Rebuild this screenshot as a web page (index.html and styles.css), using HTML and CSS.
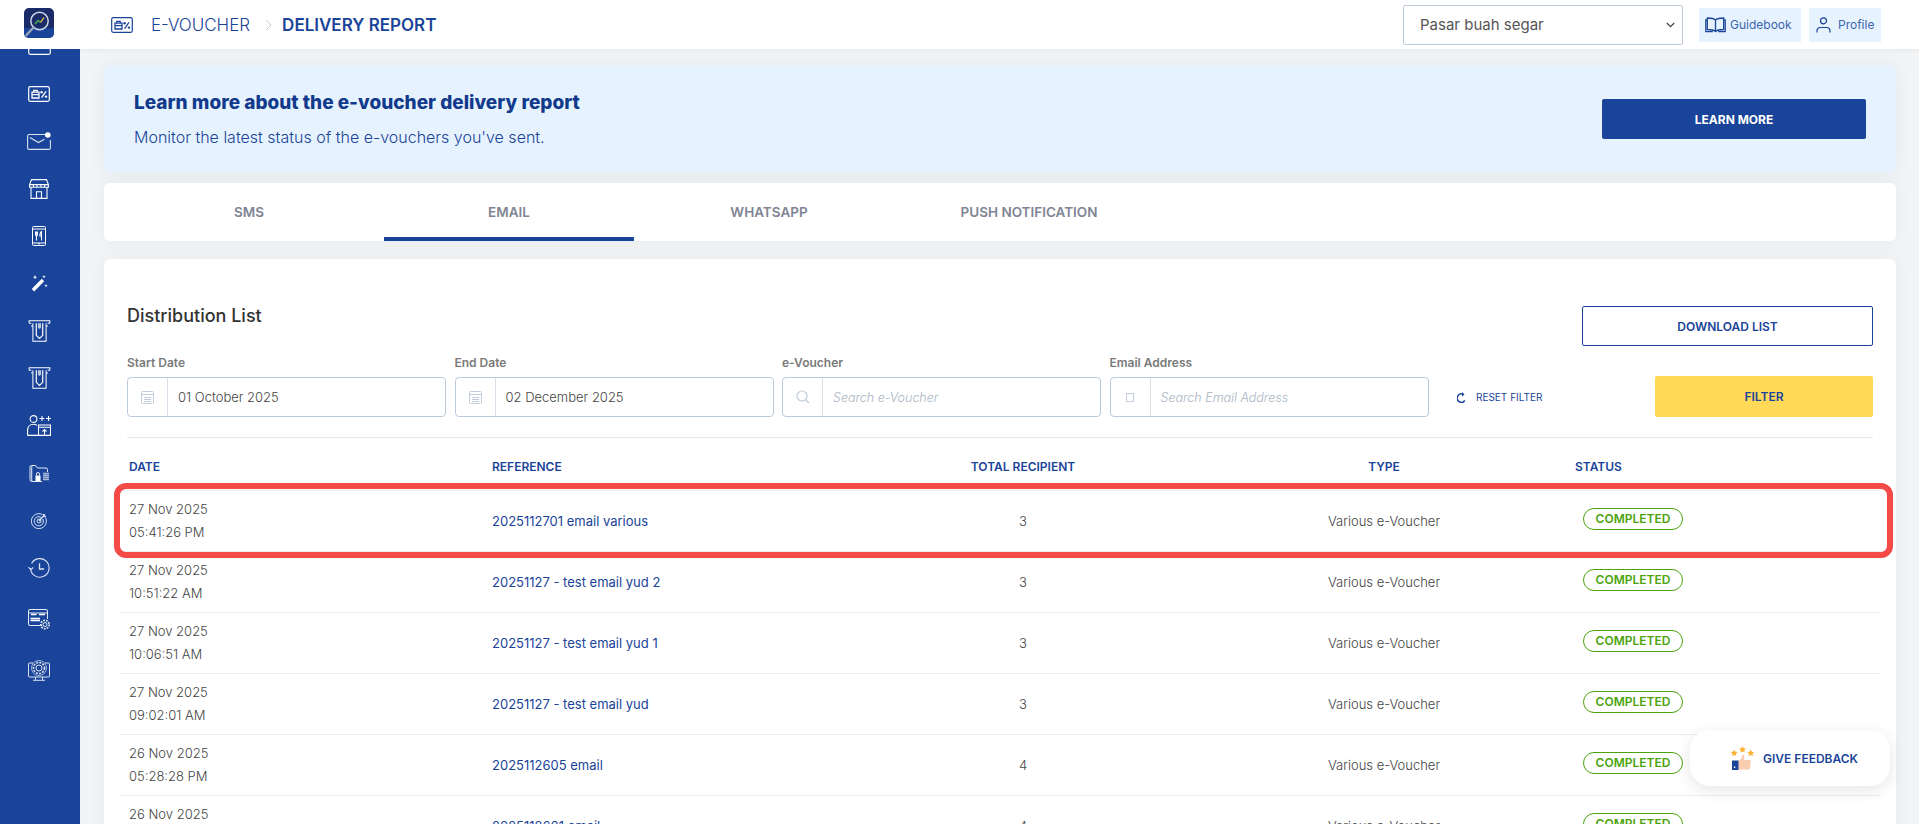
FILE: index.html
```html
<!DOCTYPE html>
<html lang="en">
<head>
    <meta charset="UTF-8">
    <title>E-Voucher Delivery Report</title>
    <link rel="stylesheet" href="styles.css">
</head>
<body>
    <!-- Shared icons -->
    <svg class="icon-defs" width="0" height="0">
        <symbol id="i-voucher" viewBox="0 0 22 16">
            <rect x="0.7" y="0.7" width="20.6" height="14.6" rx="1.5" fill="none" stroke="currentColor" stroke-width="1.2"/>
            <path d="M4 6.2h7v5.8H4zM5.8 6V4.4h3.4V6M4 8.6h7" fill="none" stroke="currentColor" stroke-width="1.3"/>
            <circle cx="13.6" cy="6.3" r="1.2" fill="currentColor"/>
            <circle cx="18" cy="10.6" r="1.2" fill="currentColor"/>
            <path d="M18 5.4l-4.4 6.2" stroke="currentColor" stroke-width="1.3"/>
        </symbol>
        <symbol id="i-atm" viewBox="0 0 24 24">
            <path d="M0.7 3.5V0.7h22.6v2.8M3 3.5H0.7M21 3.5h2.3M2.8 6.5h1.4M19.8 6.5h1.4M4.8 3.5v19.8h14.4V3.5" fill="none" stroke="currentColor" stroke-width="1.1"/>
            <path d="M8.5 3.5v13.2l3.5 3.4 3.5-3.4V3.5" fill="none" stroke="currentColor" stroke-width="1.3"/>
            <path d="M10.3 3.5v5l1.7 1.4 1.7-1.4v-5" fill="currentColor" opacity=".7"/>
        </symbol>
    </svg>

    <aside class="sidebar">
        <div class="logo-box">
            <svg class="logo" width="30" height="30" viewBox="0 0 30 30">
                <rect width="30" height="30" rx="5" fill="#1b2b68"/>
                <path d="M0 20h30v5a5 5 0 0 1-5 5H5a5 5 0 0 1-5-5z" fill="#1a4499"/>
                <circle cx="15.5" cy="13" r="8.7" fill="none" stroke="#c9d3e4" stroke-width="1.5"/>
                <path d="M9.5 19.5L2.5 27" stroke="#9aa6bb" stroke-width="2.4" stroke-linecap="round"/>
                <path d="M11 16l3-3.5 2.5 2" fill="none" stroke="#4fb04a" stroke-width="1.3"/>
                <path d="M16.5 14.500l3.500-5" fill="none" stroke="#f1d04a" stroke-width="1.3"/>
            </svg>
        </div>
        <nav class="side-nav">
            <a class="nav-item"><svg width="23" height="16" viewBox="0 0 23 16"><rect x="0.7" y="0.7" width="21.600" height="14.600" rx="1.500" fill="none" stroke="#fff" stroke-width="1.200"/></svg></a>
            <a class="nav-item"><svg class="ic-white" width="22" height="16"><use href="#i-voucher"/></svg></a>
            <a class="nav-item">
                <svg width="24" height="18" viewBox="0 0 24 18" fill="none" stroke="#d9e2f2" stroke-width="1.100">
                    <path d="M18 2.500H2A1.500 1.500 0 0 0 .6 4v12A1.500 1.500 0 0 0 2 17.400h20a1.500 1.500 0 0 0 1.400-1.400V8"/>
                    <path d="M2.800 5.600l8.700 5 6-3.400"/>
                    <circle cx="20.800" cy="3" r="2.800" fill="#fff" stroke="none"/>
                </svg>
            </a>
            <a class="nav-item">
                <svg width="20" height="20" viewBox="0 0 20 20" fill="none" stroke="#fff" stroke-width="1.100">
                    <path d="M2.500.6h15l1.900 5v2.600H.6V5.600zM.6 5.600h18.800M4.400 5.600v2.600M8 5.600v2.600M12 5.600v2.600M15.600 5.600v2.600"/>
                    <path d="M2 8.200v11.200h16V8.200M7.500 19.400v-6.600h5v6.600"/>
                </svg>
            </a>
            <a class="nav-item">
                <svg width="14" height="20" viewBox="0 0 14 20" fill="none" stroke="#fff" stroke-width="1">
                    <rect x=".5" y=".5" width="13" height="19" rx="1"/>
                    <path d="M.5 3h13M.5 17h13M6 17.800h2"/>
                    <path d="M3.500 5.500v3c0 1 1 1.500 1 1.500v4.500M5.500 5.500v3c0 1-1 1.500-1 1.500M4.500 5.500v3M9.500 14.500V5.500c-1.200.6-1.600 2-1.600 4.500h1.600" stroke-width="1.100"/>
                </svg>
            </a>
            <a class="nav-item">
                <svg width="17" height="17" viewBox="0 0 17 17" fill="#fff">
                    <path d="M10.800 3.800l2.400 2.400L3.200 16.400.7 13.900z"/>
                    <path d="M4 0l.6 1.600L6 2.200l-1.400.6L4 4.400l-.6-1.600L2 2.200l1.400-.6zM13 0l.5 1.300 1.300.5-1.300.5L13 3.600l-.5-1.300-1.300-.5 1.300-.5zM15 9l.5 1.300 1.300.5-1.300.5-.5 1.300-.5-1.300-1.300-.5 1.300-.5z"/>
                </svg>
            </a>
            <a class="nav-item"><svg class="ic-white" width="23" height="22"><use href="#i-atm"/></svg></a>
            <a class="nav-item"><svg class="ic-white" width="23" height="22"><use href="#i-atm"/></svg></a>
            <a class="nav-item">
                <svg width="24" height="21" viewBox="0 0 24 21" fill="none" stroke="#fff" stroke-width="1.100">
                    <circle cx="6.500" cy="4" r="3.400"/>
                    <path d="M.6 20.400v-5.200c0-3.400 2.400-6 5.900-6 1.300 0 2.400.3 3.400 1M.6 20.400h11"/>
                    <path d="M11.500 10h12v10.400h-12zM11.500 12.200h12M17.500 19.500v-4.500M15.500 16.500l2-2 2 2"/>
                    <path d="M12.500 3.500h5M15 1v5M19 3.500h5M21.500 1v5"/>
                </svg>
            </a>
            <a class="nav-item">
                <svg width="20" height="17" viewBox="0 0 20 17" fill="none" stroke="#e6ecf7" stroke-width="1">
                    <path d="M13 16.500H3a2 2 0 0 1-2-2V2a1.500 1.500 0 0 1 1.500-1.500h4L8.500 3H17a1.500 1.500 0 0 1 1.500 1.500V7"/>
                    <path d="M3.500 .8a2 2 0 0 0-.8 1.500v12.500a2 2 0 0 0 .8 1.500"/>
                    <rect x="6.500" y="10.500" width="5" height="5.500" fill="#fff" stroke="none"/>
                    <path d="M7.500 10.500V9a1.500 1.500 0 0 1 3 0v1.500"/>
                    <path d="M14 8.500h6M14 10.500h6M14 12.500h6M14 14.500h6" stroke="#a9bbdc" stroke-width="1.300"/>
                </svg>
            </a>
            <a class="nav-item">
                <svg width="16" height="16" viewBox="0 0 16 16" fill="none" stroke="#dbe3f3" stroke-width="1">
                    <path d="M11.500 1.600A7.500 7.500 0 1 0 14.400 4.500"/>
                    <path d="M10 4.200A4.600 4.600 0 1 0 11.800 6"/>
                    <circle cx="8" cy="8" r="2"/>
                    <path d="M8 8l6-6.500M12.500 1v2.500H15" stroke-width="1.200"/>
                </svg>
            </a>
            <a class="nav-item">
                <svg width="22" height="20" viewBox="0 0 22 20" fill="none" stroke="#dbe3f3" stroke-width="1.100">
                    <path d="M3.600 5.500A9.300 9.300 0 1 1 2.500 10"/>
                    <path d="M.5 9l2.200 2.800L5.200 9.500"/>
                    <path d="M11.500 5.200v5.800h4.600" stroke-width="1.300"/>
                </svg>
            </a>
            <a class="nav-item nav-item-gap">
                <svg width="23" height="21" viewBox="0 0 23 21" fill="none" stroke="#e6ecf7" stroke-width="1">
                    <path d="M14 16.500H2a1.500 1.500 0 0 1-1.500-1.500V2A1.500 1.500 0 0 1 2 .5h16A1.500 1.500 0 0 1 19.500 2v8"/>
                    <path d="M.5 4h19"/>
                    <path d="M3 5.500h5.500M11 5.500h6" stroke="#fff" stroke-width="1.600"/>
                    <path d="M2.500 9.500h9.500M2.500 11.500h9.500" stroke="#fff" stroke-width="1.500"/>
                    <circle cx="17" cy="15.500" r="2"/>
                    <circle cx="17" cy="15.500" r="4.200" stroke-width="1.600" stroke-dasharray="1.800 1.100"/>
                </svg>
            </a>
            <a class="nav-item nav-item-gap">
                <svg width="22" height="21" viewBox="0 0 22 21" fill="none" stroke="#dbe3f3" stroke-width="1">
                    <path d="M5 3H1.500A1 1 0 0 0 .5 4v12a1 1 0 0 0 1 1h19a1 1 0 0 0 1-1V4a1 1 0 0 0-1-1H17"/>
                    <path d="M7.500 17v3M14.500 17v3M5 20.300h12"/>
                    <circle cx="11" cy="8" r="3"/>
                    <circle cx="11" cy="8" r="5.500" stroke-width="1.600" stroke-dasharray="2 1.200"/>
                    <circle cx="11" cy="8" r="7.500" stroke-width=".7"/>
                </svg>
            </a>
        </nav>
    </aside>

    <div class="main">
        <header class="topbar">
            <div class="breadcrumb">
                <svg class="crumb-icon" width="22" height="16"><use href="#i-voucher"/></svg>
                <span class="crumb-parent">E-VOUCHER</span>
                <svg class="crumb-sep" width="7" height="12" viewBox="0 0 7 12"><path d="M1 1l5 5-5 5" fill="none" stroke="#c6cbd3" stroke-width="1"/></svg>
                <span class="crumb-current">DELIVERY REPORT</span>
            </div>
            <div class="topbar-right">
                <div class="merchant-select">
                    <span>Pasar buah segar</span>
                    <svg width="9" height="6" viewBox="0 0 9 6"><path d="M.8 1l3.700 3.700L8.200 1" fill="none" stroke="#444" stroke-width="1.200"/></svg>
                </div>
                <a class="top-link link-guide">
                    <svg width="21" height="16" viewBox="0 0 21 16" fill="none" stroke="#1a4499" stroke-width="1.300">
                        <path d="M10.500 3C9 1.500 6 1 2.300 1v11.500c3.700 0 6.700.5 8.200 2 1.500-1.500 4.500-2 8.200-2V1C15 1 12 1.500 10.500 3zM10.500 3v11.500"/>
                        <path d="M2.300 3H.8v11.700h7M18.700 3h1.500v11.700h-7"/>
                    </svg>
                    Guidebook
                </a>
                <a class="top-link link-profile">
                    <svg width="15" height="16" viewBox="0 0 15 16" fill="none" stroke="#1a4499" stroke-width="1.200">
                        <circle cx="7.500" cy="3.800" r="3"/>
                        <path d="M1 15.500v-1.500c0-2 1.500-3.500 3.500-3.500h6c2 0 3.500 1.500 3.500 3.500v1.500"/>
                    </svg>
                    Profile
                </a>
            </div>
        </header>

        <div class="content">
            <section class="banner">
                <div>
                    <h2 class="banner-title">Learn more about the e-voucher delivery report</h2>
                    <p class="banner-text">Monitor the latest status of the e-vouchers you've sent.</p>
                </div>
                <button class="btn-learn">LEARN MORE</button>
            </section>

            <nav class="tabs">
                <a class="tab">SMS</a>
                <a class="tab tab-active">EMAIL</a>
                <a class="tab">WHATSAPP</a>
                <a class="tab">PUSH NOTIFICATION</a>
            </nav>

            <section class="card">
                <div class="card-head">
                    <h3 class="card-title">Distribution List</h3>
                    <button class="btn-download">DOWNLOAD LIST</button>
                </div>

                <div class="filters">
                    <div class="field">
                        <label class="field-label">Start Date</label>
                        <div class="field-box">
                            <span class="field-icon">
                                <svg width="13" height="14" viewBox="0 0 13 14" fill="none" stroke="#c3ccd9"><rect x=".5" y="1.500" width="12" height="12" rx="1"/><path d="M.5 4.500h12M3 7.500h7M3 9.500h7M3 11.500h7"/></svg>
                            </span>
                            <span class="field-value">01 October 2025</span>
                        </div>
                    </div>
                    <div class="field">
                        <label class="field-label">End Date</label>
                        <div class="field-box">
                            <span class="field-icon">
                                <svg width="13" height="14" viewBox="0 0 13 14" fill="none" stroke="#c3ccd9"><rect x=".5" y="1.500" width="12" height="12" rx="1"/><path d="M.5 4.500h12M3 7.500h7M3 9.500h7M3 11.500h7"/></svg>
                            </span>
                            <span class="field-value">02 December 2025</span>
                        </div>
                    </div>
                    <div class="field">
                        <label class="field-label">e-Voucher</label>
                        <div class="field-box">
                            <span class="field-icon">
                                <svg width="14" height="14" viewBox="0 0 14 14" fill="none" stroke="#c3ccd9" stroke-width="1.200"><circle cx="6" cy="6" r="5"/><path d="M9.500 9.500l3.500 3.500"/></svg>
                            </span>
                            <span class="field-placeholder">Search e-Voucher</span>
                        </div>
                    </div>
                    <div class="field">
                        <label class="field-label">Email Address</label>
                        <div class="field-box">
                            <span class="field-icon"><span class="missing-glyph"></span></span>
                            <span class="field-placeholder">Search Email Address</span>
                        </div>
                    </div>
                    <a class="reset-filter">
                        <svg width="9" height="11" viewBox="0 0 9 11" fill="none" stroke="#1a4499" stroke-width="1.500"><path d="M7.800 8.500A4.200 4.200 0 1 1 6 2.200"/><path d="M5 0l2.500 2.400L5 4.500" fill="#1a4499" stroke="none"/></svg>
                        RESET FILTER
                    </a>
                    <button class="btn-filter">FILTER</button>
                </div>

                <div class="divider"></div>

                <div class="table">
                    <div class="table-head">
                        <div>DATE</div>
                        <div>REFERENCE</div>
                        <div class="cell-center">TOTAL RECIPIENT</div>
                        <div class="cell-center">TYPE</div>
                        <div>STATUS</div>
                    </div>

                    <div class="table-row">
                        <div class="cell-date">27 Nov 2025<br>05:41:26 PM</div>
                        <div class="cell-ref">2025112701 email various</div>
                        <div class="cell-center">3</div>
                        <div class="cell-center">Various e-Voucher</div>
                        <div class="cell-status"><span class="badge">COMPLETED</span></div>
                    </div>
                    <div class="table-row">
                        <div class="cell-date">27 Nov 2025<br>10:51:22 AM</div>
                        <div class="cell-ref">20251127 - test email yud 2</div>
                        <div class="cell-center">3</div>
                        <div class="cell-center">Various e-Voucher</div>
                        <div class="cell-status"><span class="badge">COMPLETED</span></div>
                    </div>
                    <div class="table-row">
                        <div class="cell-date">27 Nov 2025<br>10:06:51 AM</div>
                        <div class="cell-ref">20251127 - test email yud 1</div>
                        <div class="cell-center">3</div>
                        <div class="cell-center">Various e-Voucher</div>
                        <div class="cell-status"><span class="badge">COMPLETED</span></div>
                    </div>
                    <div class="table-row">
                        <div class="cell-date">27 Nov 2025<br>09:02:01 AM</div>
                        <div class="cell-ref">20251127 - test email yud</div>
                        <div class="cell-center">3</div>
                        <div class="cell-center">Various e-Voucher</div>
                        <div class="cell-status"><span class="badge">COMPLETED</span></div>
                    </div>
                    <div class="table-row">
                        <div class="cell-date">26 Nov 2025<br>05:28:28 PM</div>
                        <div class="cell-ref">2025112605 email</div>
                        <div class="cell-center">4</div>
                        <div class="cell-center">Various e-Voucher</div>
                        <div class="cell-status"><span class="badge">COMPLETED</span></div>
                    </div>
                    <div class="table-row">
                        <div class="cell-date">26 Nov 2025<br>05:02:11 PM</div>
                        <div class="cell-ref">2025112601 email</div>
                        <div class="cell-center">4</div>
                        <div class="cell-center">Various e-Voucher</div>
                        <div class="cell-status"><span class="badge">COMPLETED</span></div>
                    </div>
                </div>
            </section>
        </div>
    </div>

    <!-- Red highlight drawn over the first row -->
    <div class="row-highlight"></div>

    <a class="feedback">
        <svg width="25" height="24" viewBox="0 0 25 24">
            <path d="M4.200 3.500l1.100 2.200 2.400.3-1.800 1.700.5 2.400-2.200-1.200-2.200 1.200.5-2.400L.7 6l2.400-.3z" fill="#fbb336"/>
            <path d="M12.500 0l1.100 2.200 2.400.3-1.800 1.700.5 2.400-2.200-1.200-2.200 1.200.5-2.400L9 2.500l2.400-.3z" fill="#fbb336"/>
            <path d="M20.800 3.500l1.100 2.200 2.400.3-1.800 1.700.5 2.400-2.200-1.200-2.200 1.200.5-2.400L17.300 6l2.400-.3z" fill="#fbb336"/>
            <path d="M8 15l3.500-2.500.7-3.500h2v5h5.500c1 0 1.300 1 1.300 1.500l-1 6.500c-.2 1-.8 1.500-1.800 1.500H8z" fill="#f9cdb0"/>
            <rect x="2" y="14.500" width="6.500" height="9.500" fill="#1a4499"/>
            <rect x="3.800" y="20.500" width="1.500" height="1.500" fill="#fff"/>
        </svg>
        GIVE FEEDBACK
    </a>
</body>
</html>
```

FILE: styles.css
```css
* {
    box-sizing: border-box;
}

html, body {
    height: 100%;
}

body {
    margin: 0;
    display: flex;
    overflow: hidden;
    background-color: #f3f4f6;
    font-family: Inter, "Noto Sans", sans-serif;
    color: #333;
}

a {
    color: inherit;
    text-decoration: none;
}

button {
    font-family: inherit;
    cursor: pointer;
}

.icon-defs {
    position: absolute;
}

/* Sidebar */
.sidebar {
    flex: 0 0 80px;
    height: 100%;
    background-color: #1a4499;
    overflow: hidden;
}

.logo-box {
    position: relative;
    z-index: 2;
    height: 49px;
    background-color: #fff;
    display: flex;
    justify-content: center;
    padding-top: 8px;
}

.logo {
    margin-left: -2px;
}

.side-nav {
    margin-top: -26px;
    color: #fff;
}

.nav-item {
    height: 47.4px;
    padding-right: 2px;
    display: flex;
    align-items: center;
    justify-content: center;
}

.nav-item-gap {
    margin-top: 4px;
}

.ic-white {
    color: #fff;
}

/* Top bar */
.main {
    flex: 1;
    min-width: 0;
}

.topbar {
    position: relative;
    z-index: 1;
    height: 49px;
    background-color: #fff;
    box-shadow: 0 1px 6px rgba(0, 0, 0, 0.06);
    display: flex;
    align-items: center;
    justify-content: space-between;
    padding: 0 38px 0 31px;
}

.breadcrumb {
    display: flex;
    align-items: center;
    color: #1a4499;
    font-size: 17px;
}

.crumb-icon {
    margin-right: 18px;
}

.crumb-parent {
    font-weight: 300;
}

.crumb-sep {
    margin: 0 10px 0 15px;
}

.crumb-current {
    font-weight: 600;
}

.topbar-right {
    display: flex;
    align-items: center;
}

.merchant-select {
    width: 280px;
    height: 40px;
    border: 1px solid #bccada;
    border-radius: 2px;
    display: flex;
    align-items: center;
    justify-content: space-between;
    padding: 0 7px 0 16px;
    font-size: 15px;
    color: #555;
    margin-right: 16px;
}

.top-link {
    height: 34px;
    background-color: #e6f3fe;
    display: flex;
    align-items: center;
    gap: 4px;
    font-size: 12px;
    color: #3d65ae;
}

.link-guide {
    width: 102px;
    padding-left: 6px;
    margin-right: 8px;
}

.link-profile {
    width: 72px;
    padding-left: 7px;
    gap: 7px;
}

/* Page content */
.content {
    padding: 16px 23px 0 24px;
}

.banner {
    height: 108px;
    background-color: #e6f3fe;
    border-radius: 6px;
    box-shadow: 0 0 20px rgba(0, 0, 0, 0.06);
    display: flex;
    align-items: center;
    justify-content: space-between;
    padding: 0 30px;
    margin-bottom: 10px;
}

.banner-title {
    margin: 0 0 11px;
    font-size: 19px;
    line-height: 24px;
    font-weight: 800;
    color: #123a8c;
}

.banner-text {
    margin: 0;
    font-size: 16px;
    line-height: 22px;
    font-weight: 300;
    color: #1a4499;
}

.btn-learn {
    width: 264px;
    height: 40px;
    border: none;
    border-radius: 2px;
    background-color: #1a4499;
    color: #fff;
    font-size: 12px;
    font-weight: 700;
}

.tabs {
    height: 58px;
    background-color: #fff;
    border-radius: 6px;
    box-shadow: 0 0 20px rgba(0, 0, 0, 0.05);
    display: flex;
    gap: 10px;
    padding-left: 20px;
    margin-bottom: 18px;
}

.tab {
    width: 250px;
    display: flex;
    align-items: center;
    justify-content: center;
    font-size: 13.500px;
    font-weight: 600;
    color: #7f8594;
}

.tab-active {
    border-bottom: 4px solid #1a4499;
    padding-top: 4px;
}

/* Distribution list card */
.card {
    background-color: #fff;
    border-radius: 6px;
    box-shadow: 0 0 20px rgba(0, 0, 0, 0.05);
    padding: 47px 23px 0;
}

.card-head {
    display: flex;
    align-items: center;
    justify-content: space-between;
    height: 40px;
    margin-bottom: 9px;
}

.card-title {
    margin: 0 0 21px;
    font-size: 18px;
    font-weight: 500;
    color: #333;
}

.btn-download {
    width: 291px;
    height: 40px;
    background-color: #fff;
    border: 1px solid #1a4499;
    border-radius: 2px;
    color: #1a4499;
    font-size: 12px;
    font-weight: 600;
}

.filters {
    display: flex;
    align-items: flex-end;
    gap: 8.500px;
}

.field {
    width: 319px;
}

.field-label {
    display: block;
    height: 22px;
    font-size: 12px;
    line-height: 16px;
    font-weight: 600;
    color: #7a7a7a;
}

.field-box {
    height: 40px;
    border: 1px solid #bccada;
    border-radius: 4px;
    display: flex;
    align-items: center;
    font-size: 13px;
}

.field-icon {
    flex: 0 0 40px;
    height: 100%;
    border-right: 1px solid #d8dfe8;
    display: flex;
    align-items: center;
    justify-content: center;
}

.missing-glyph {
    width: 8px;
    height: 9px;
    border: 1px solid #c3ccd9;
}

.field-value {
    padding-left: 10px;
    color: #444;
    font-weight: 300;
}

.field-placeholder {
    padding-left: 10px;
    color: #a9b4c4;
    font-style: italic;
    font-weight: 300;
    font-size: 12.500px;
}

.reset-filter {
    display: flex;
    align-items: center;
    gap: 10px;
    height: 40px;
    margin-left: 20px;
    font-size: 10px;
    color: #1a4499;
}

.btn-filter {
    width: 218px;
    height: 41px;
    margin-left: auto;
    background-color: #ffd957;
    border: none;
    border-radius: 2px;
    color: #1a4499;
    font-size: 12px;
    font-weight: 600;
}

.divider {
    height: 1px;
    background-color: #e3e6ea;
    margin-top: 20px;
}

/* Table */
.table {
    margin: 0 -7px 0 -8px;
    font-size: 13px;
}

.table-head,
.table-row {
    display: grid;
    grid-template-columns: 363px 361px 360px 362px 316px;
}

.table-head {
    height: 52px;
    padding-top: 21px;
    font-size: 12px;
    line-height: 16px;
    font-weight: 600;
    color: #1a4499;
}

.table-head > div {
    padding-left: 10px;
}

.table-head > .cell-center {
    padding-left: 0;
}

.table-row {
    height: 61px;
    border-top: 1px solid #e8ebf2;
    align-items: center;
    font-weight: 300;
    color: #444;
}

.cell-center {
    text-align: center;
}

.cell-date {
    padding-left: 10px;
    line-height: 23px;
}

.cell-ref {
    padding-left: 10px;
    color: #1a4499;
    font-weight: 400;
}

.cell-status {
    padding: 0 0 5px 18px;
}

.badge {
    display: flex;
    align-items: center;
    justify-content: center;
    width: 100px;
    height: 22px;
    border: 1px solid #4ca30d;
    border-radius: 11px;
    font-size: 12px;
    font-weight: 600;
    color: #4ca30d;
}

/* Floating bits */
.row-highlight {
    position: absolute;
    left: 114px;
    top: 483px;
    width: 1779px;
    height: 75px;
    border: 6px solid #f44a48;
    border-radius: 12px;
    pointer-events: none;
}

.feedback {
    position: absolute;
    left: 1690px;
    top: 730px;
    width: 200px;
    height: 56px;
    background-color: #fff;
    border-radius: 20px;
    box-shadow: 0 4px 16px rgba(0, 0, 0, 0.1);
    display: flex;
    align-items: center;
    gap: 8px;
    padding-left: 40px;
    font-size: 12px;
    font-weight: 600;
    color: #1a4499;
}
```
